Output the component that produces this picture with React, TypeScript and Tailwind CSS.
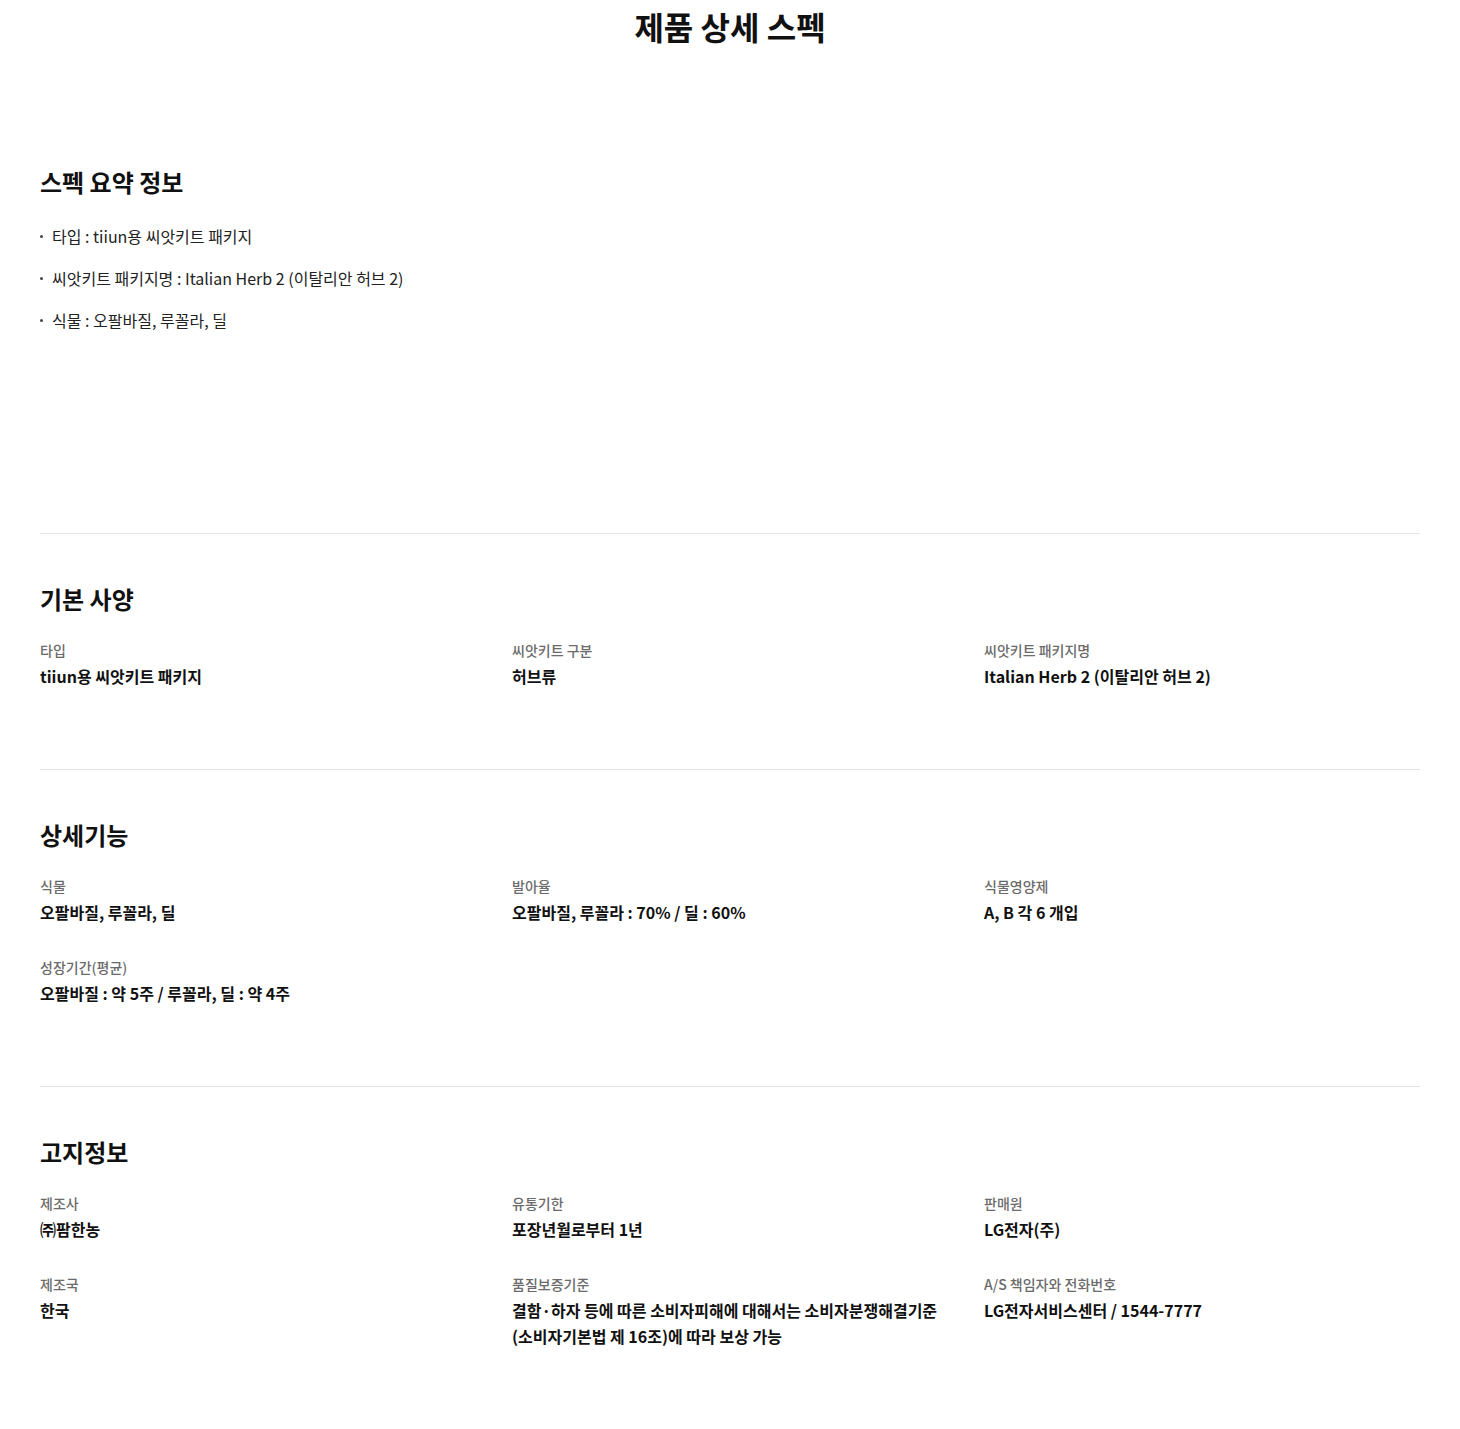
import React from "react"
import { FC } from "react"

interface SpecItem {
    label: string
    value: React.ReactNode
}

const basicSpecs: SpecItem[] = [
    { label: "타입", value: "tiiun용 씨앗키트 패키지" },
    { label: "씨앗키트 구분", value: "허브류" },
    { label: "씨앗키트 패키지명", value: "Italian Herb 2 (이탈리안 허브 2)" },
]

const detailSpecs: SpecItem[] = [
    { label: "식물", value: "오팔바질, 루꼴라, 딜" },
    { label: "발아율", value: "오팔바질, 루꼴라 : 70% / 딜 : 60%" },
    { label: "식물영양제", value: "A, B 각 6 개입" },
    { label: "성장기간(평균)", value: "오팔바질 : 약 5주 / 루꼴라, 딜 : 약 4주" },
]

const noticeSpecs: SpecItem[] = [
    { label: "제조사", value: "㈜팜한농" },
    { label: "유통기한", value: "포장년월로부터 1년" },
    { label: "판매원", value: "LG전자(주)" },
    { label: "제조국", value: "한국" },
    {
        label: "품질보증기준",
        value: "결함·하자 등에 따른 소비자피해에 대해서는 소비자분쟁해결기준 (소비자기본법 제 16조)에 따라 보상 가능",
    },
    { label: "A/S 책임자와 전화번호", value: "LG전자서비스센터 / 1544-7777" },
]

const summary = [
    "타입 : tiiun용 씨앗키트 패키지",
    "씨앗키트 패키지명 : Italian Herb 2 (이탈리안 허브 2)",
    "식물 : 오팔바질, 루꼴라, 딜",
]

const SectionTitle: FC<{ children: React.ReactNode }> = ({ children }) => (
    <h3 className="text-[24px] leading-[36px] font-bold text-[#111]">{children}</h3>
)

const SpecGrid: FC<{ title: string; items: SpecItem[] }> = ({ title, items }) => (
    <section className="border-t border-[#e4e4e4] pt-[47px] pb-20">
        <SectionTitle>{title}</SectionTitle>
        <dl className="mt-[23px] grid grid-cols-3 gap-x-9 gap-y-8">
            {items.map((item, i) => (
                <div key={i}>
                    <dt className="text-[14px] leading-5 font-medium text-[#6b6b6b]">
                        {item.label}
                    </dt>
                    <dd className="mt-[3px] text-[16px] leading-[26px] font-bold text-[#111]">
                        {item.value}
                    </dd>
                </div>
            ))}
        </dl>
    </section>
)

export default function App() {
    return (
        <div
            className="bg-white px-10 pb-16"
            style={{ fontFamily: '"Noto Sans CJK KR", "Noto Sans", sans-serif' }}
        >
            <h2 className="pt-[2px] text-center text-[32px] leading-[48px] font-bold text-[#111]">
                제품 상세 스펙
            </h2>

            <section className="mt-[114px] pb-[200px]">
                <SectionTitle>스펙 요약 정보</SectionTitle>
                <ul className="mt-[23px] flex flex-col gap-4">
                    {summary.map((line, i) => (
                        <li
                            key={i}
                            className="flex items-center text-[16px] leading-[26px] text-[#222]"
                        >
                            <span className="w-[12px] shrink-0">
                                <span className="block h-[3px] w-[3px] rounded-full bg-[#444]" />
                            </span>
                            <span>{line}</span>
                        </li>
                    ))}
                </ul>
            </section>

            <SpecGrid title="기본 사양" items={basicSpecs} />
            <SpecGrid title="상세기능" items={detailSpecs} />
            <SpecGrid title="고지정보" items={noticeSpecs} />
        </div>
    )
}
